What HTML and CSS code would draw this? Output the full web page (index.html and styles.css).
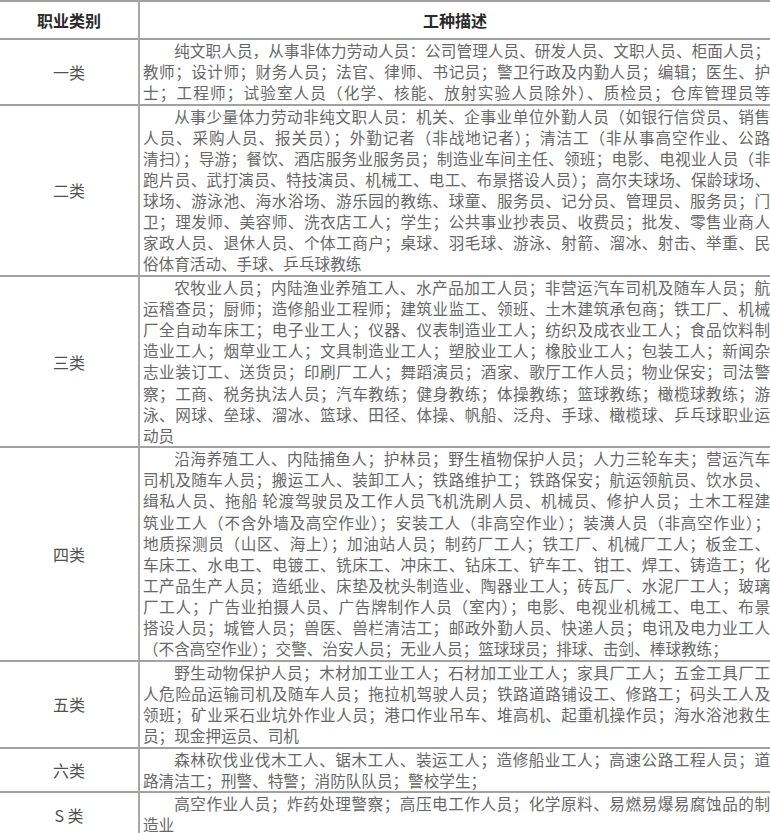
FILE: index.html
```html
<!DOCTYPE html>
<html lang="zh-CN">
<head>
<meta charset="utf-8">
<title>职业类别</title>
<link rel="stylesheet" href="styles.css">
</head>
<body>
<div class="table">
  <div class="row head">
    <div class="cat">职业类别</div>
    <div class="htitle">工种描述</div>
  </div>
  <div class="row">
    <div class="cat">一类</div>
    <div class="desc">
      <div class="ln ind">纯文职人员，从事非体力劳动人员：公司管理人员、研发人员、文职人员、柜面人员；</div>
      <div class="ln">教师；设计师；财务人员；法官、律师、书记员；警卫行政及内勤人员；编辑；医生、护</div>
      <div class="ln">士；工程师；试验室人员（化学、核能、放射实验人员除外）、质检员；仓库管理员等</div>
    </div>
  </div>
  <div class="row">
    <div class="cat">二类</div>
    <div class="desc">
      <div class="ln ind">从事少量体力劳动非纯文职人员：机关、企事业单位外勤人员（如银行信贷员、销售</div>
      <div class="ln">人员、采购人员、报关员）；外勤记者（非战地记者）；清洁工（非从事高空作业、公路</div>
      <div class="ln">清扫）；导游；餐饮、酒店服务业服务员；制造业车间主任、领班；电影、电视业人员（非</div>
      <div class="ln">跑片员、武打演员、特技演员、机械工、电工、布景搭设人员）；高尔夫球场、保龄球场、</div>
      <div class="ln">球场、游泳池、海水浴场、游乐园的教练、球童、服务员、记分员、管理员、服务员；门</div>
      <div class="ln">卫；理发师、美容师、洗衣店工人；学生；公共事业抄表员、收费员；批发、零售业商人</div>
      <div class="ln">家政人员、退休人员、个体工商户；桌球、羽毛球、游泳、射箭、溜冰、射击、举重、民</div>
      <div class="ln end">俗体育活动、手球、乒乓球教练</div>
    </div>
  </div>
  <div class="row">
    <div class="cat">三类</div>
    <div class="desc">
      <div class="ln ind">农牧业人员；内陆渔业养殖工人、水产品加工人员；非营运汽车司机及随车人员；航</div>
      <div class="ln">运稽查员；厨师；造修船业工程师；建筑业监工、领班、土木建筑承包商；铁工厂、机械</div>
      <div class="ln">厂全自动车床工；电子业工人；仪器、仪表制造业工人；纺织及成衣业工人；食品饮料制</div>
      <div class="ln">造业工人；烟草业工人；文具制造业工人；塑胶业工人；橡胶业工人；包装工人；新闻杂</div>
      <div class="ln">志业装订工、送货员；印刷厂工人；舞蹈演员；酒家、歌厅工作人员；物业保安；司法警</div>
      <div class="ln">察；工商、税务执法人员；汽车教练；健身教练；体操教练；篮球教练；橄榄球教练；游</div>
      <div class="ln">泳、网球、垒球、溜冰、篮球、田径、体操、帆船、泛舟、手球、橄榄球、乒乓球职业运</div>
      <div class="ln end">动员</div>
    </div>
  </div>
  <div class="row">
    <div class="cat">四类</div>
    <div class="desc">
      <div class="ln ind">沿海养殖工人、内陆捕鱼人；护林员；野生植物保护人员；人力三轮车夫；营运汽车</div>
      <div class="ln">司机及随车人员；搬运工人、装卸工人；铁路维护工；铁路保安；航运领航员、饮水员、</div>
      <div class="ln">缉私人员、拖船 轮渡驾驶员及工作人员飞机洗刷人员、机械员、修护人员；土木工程建</div>
      <div class="ln">筑业工人（不含外墙及高空作业）；安装工人（非高空作业）；装潢人员（非高空作业）；</div>
      <div class="ln">地质探测员（山区、海上）；加油站人员；制药厂工人；铁工厂、机械厂工人；板金工、</div>
      <div class="ln">车床工、水电工、电镀工、铣床工、冲床工、钻床工、铲车工、钳工、焊工、铸造工；化</div>
      <div class="ln">工产品生产人员；造纸业、床垫及枕头制造业、陶器业工人；砖瓦厂、水泥厂工人；玻璃</div>
      <div class="ln">厂工人；广告业拍摄人员、广告牌制作人员（室内）；电影、电视业机械工、电工、布景</div>
      <div class="ln">搭设人员；城管人员；兽医、兽栏清洁工；邮政外勤人员、快递人员；电讯及电力业工人</div>
      <div class="ln end">（不含高空作业）；交警、治安人员；无业人员；篮球球员；排球、击剑、棒球教练；</div>
    </div>
  </div>
  <div class="row">
    <div class="cat">五类</div>
    <div class="desc">
      <div class="ln ind">野生动物保护人员；木材加工业工人；石材加工业工人；家具厂工人；五金工具厂工</div>
      <div class="ln">人危险品运输司机及随车人员；拖拉机驾驶人员；铁路道路铺设工、修路工；码头工人及</div>
      <div class="ln">领班；矿业采石业坑外作业人员；港口作业吊车、堆高机、起重机操作员；海水浴池救生</div>
      <div class="ln end">员；现金押运员、司机</div>
    </div>
  </div>
  <div class="row">
    <div class="cat">六类</div>
    <div class="desc">
      <div class="ln ind">森林砍伐业伐木工人、锯木工人、装运工人；造修船业工人；高速公路工程人员；道</div>
      <div class="ln end">路清洁工；刑警、特警；消防队队员；警校学生；</div>
    </div>
  </div>
  <div class="row">
    <div class="cat">S 类</div>
    <div class="desc">
      <div class="ln ind">高空作业人员；炸药处理警察；高压电工作人员；化学原料、易燃易爆易腐蚀品的制</div>
      <div class="ln end">造业</div>
    </div>
  </div>
</div>
</body>
</html>
```

FILE: styles.css
```css
html, body {
  margin: 0;
  padding: 0;
  background: #ffffff;
}
body {
  overflow: hidden;
  font-family: "Noto Sans CJK SC", "Noto Sans", sans-serif;
}
.table {
  width: 770px;
  border-top: 2px solid #a2a2a2;
}
.row {
  display: flex;
  border-bottom: 2px solid #a2a2a2;
}
.head {
  height: 36px;
}
.cat {
  width: 138px;
  flex: none;
  border-right: 2px solid #a8a8a8;
  display: flex;
  align-items: center;
  justify-content: center;
  font-size: 16px;
  color: #505050;
}
.head .cat,
.htitle {
  font-weight: bold;
  color: #2a2a2a;
  font-size: 16px;
}
.htitle {
  flex: 1;
  display: flex;
  align-items: center;
  justify-content: center;
}
.desc {
  flex: 1;
  min-width: 0;
  padding: 0 0 0.5px 3px;
  font-size: 15.6px;
  line-height: 21.1px;
  color: #676767;
}
.ln {
  text-align: justify;
  text-align-last: justify;
}
.ln.end {
  text-align-last: left;
}
.ind {
  text-indent: 2em;
}
```
